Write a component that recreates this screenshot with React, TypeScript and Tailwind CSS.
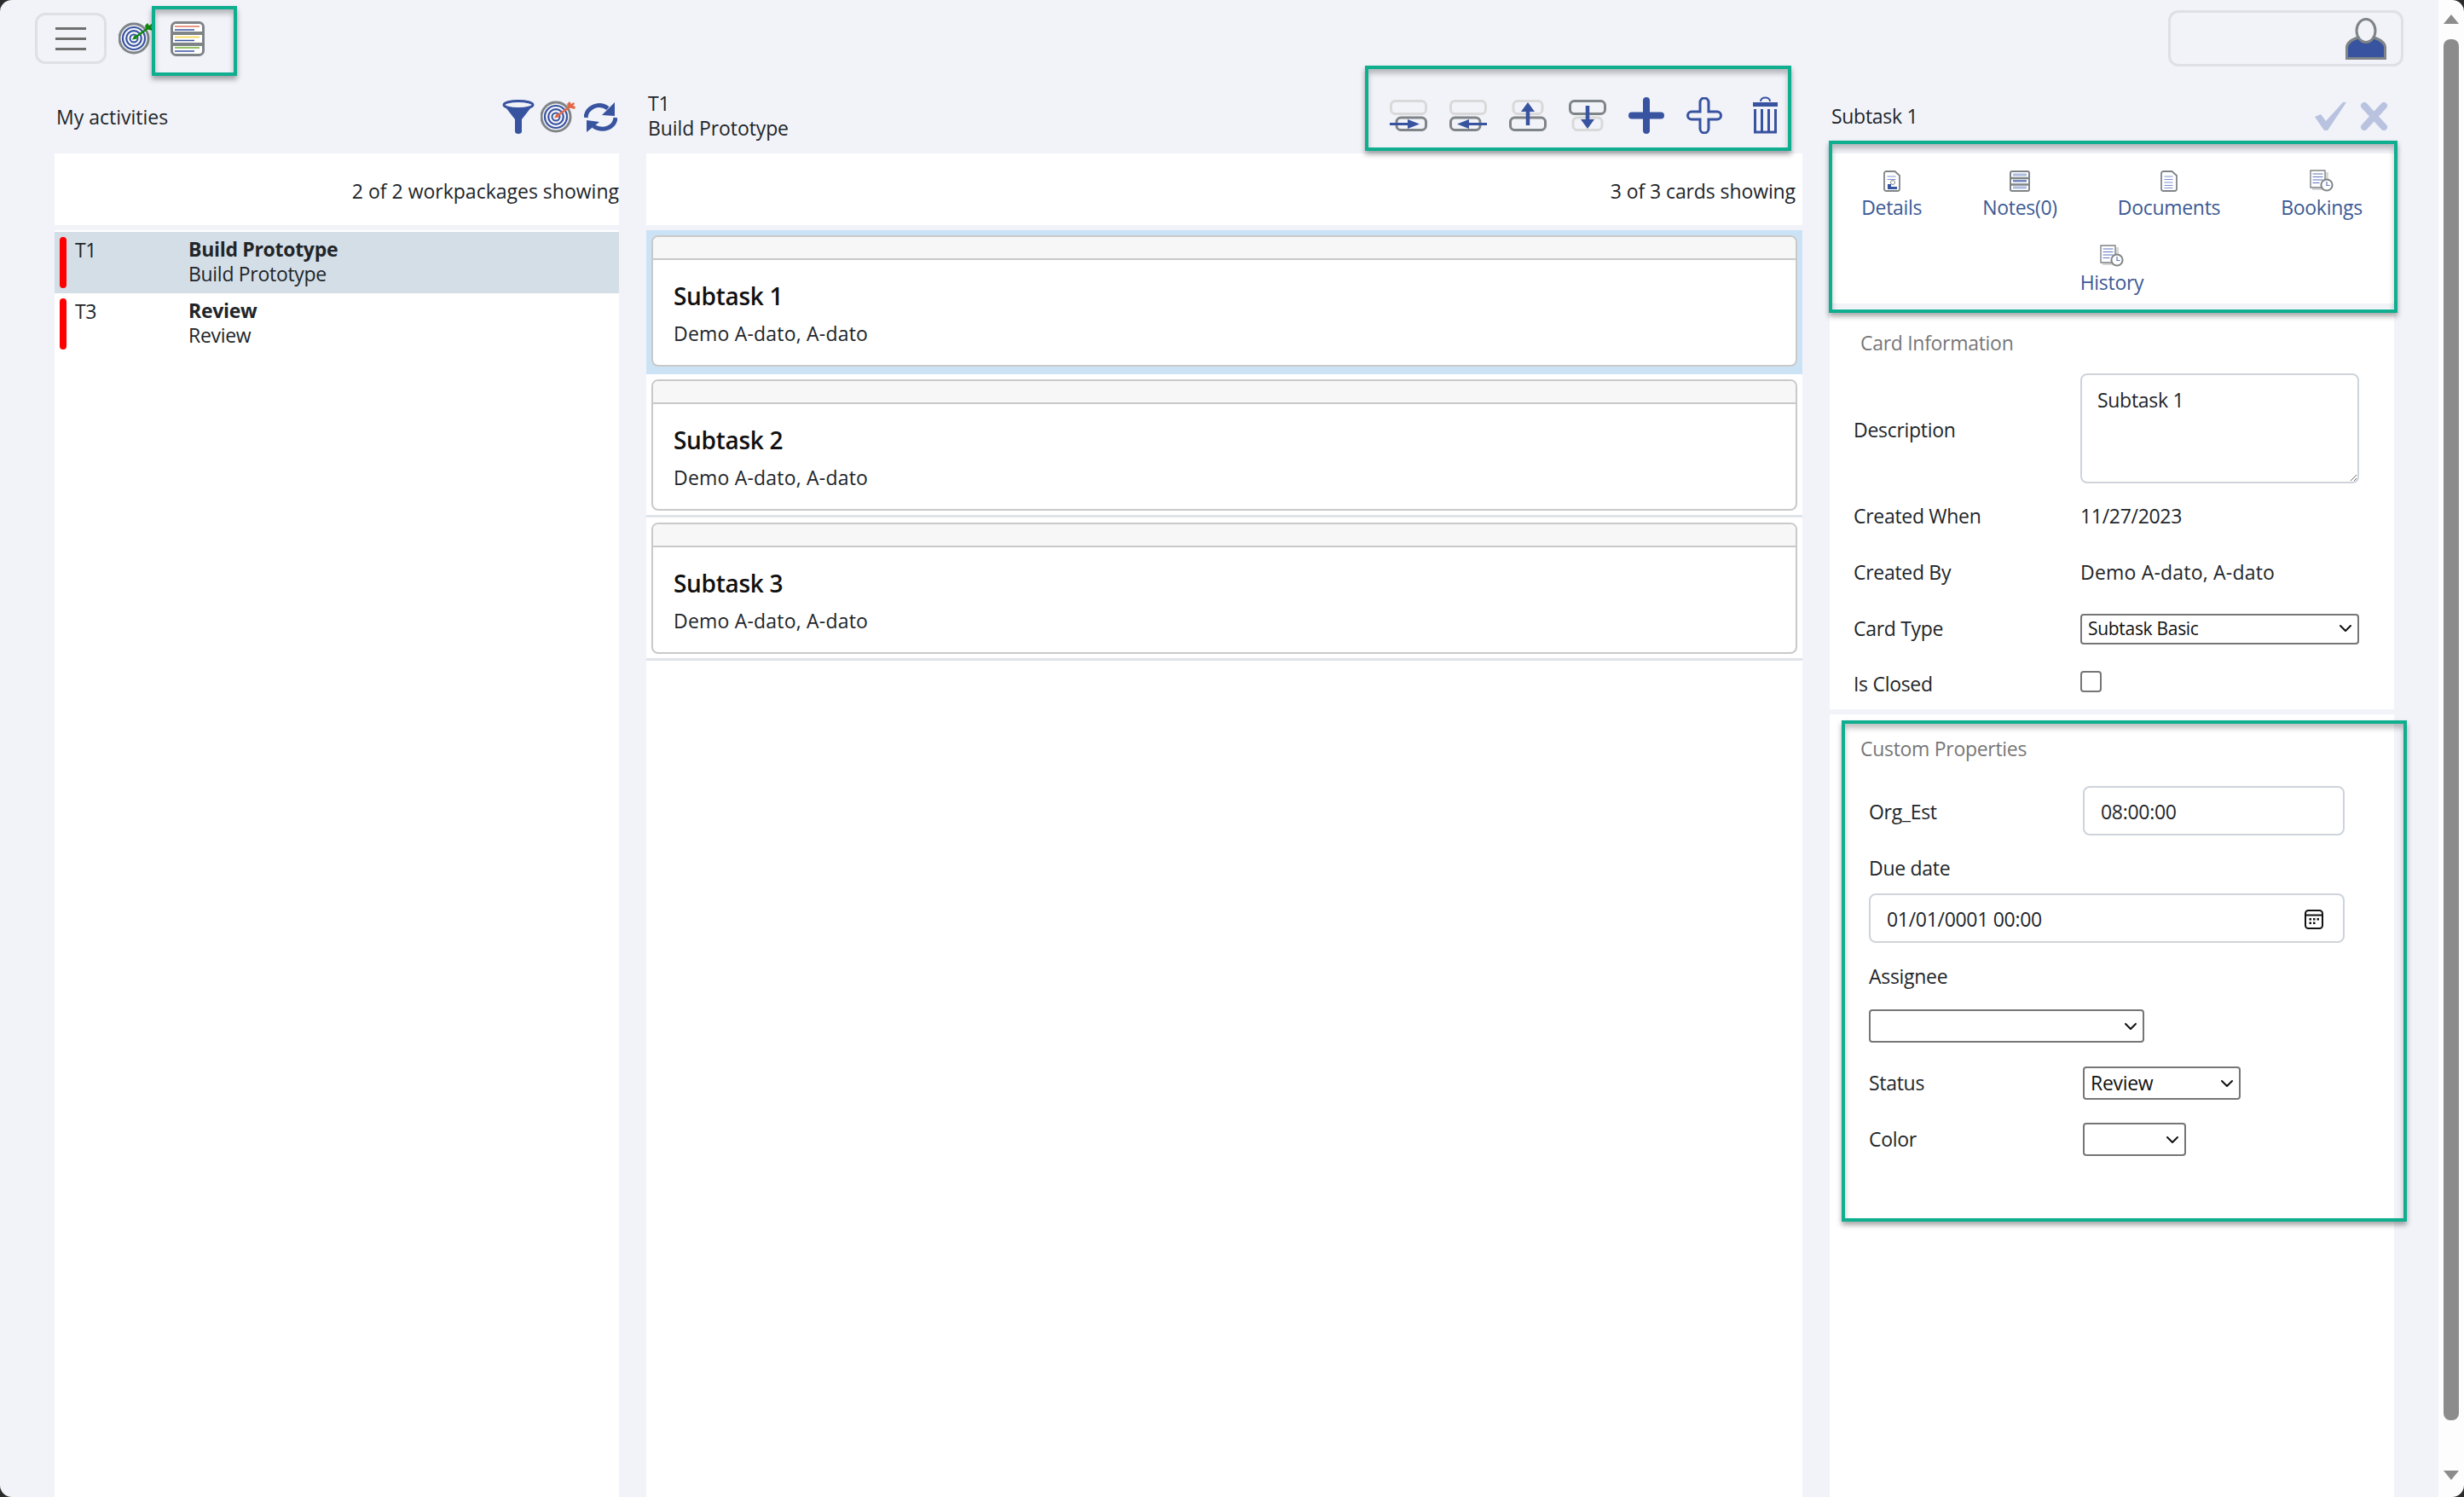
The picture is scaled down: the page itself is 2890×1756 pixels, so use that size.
import { ChevronDown } from "lucide-react"

const BLUE = "#38539f"
const GRAY = "#7f8487"
const LIGHT = "#d9d9d9"

function TargetIcon({ arrow, className }: { arrow: string; className: string }) {
  return (
    <svg viewBox="0 0 44 38" className={className} fill="none">
      <circle cx="18" cy="19" r="17" fill="#f6f7fb" stroke={GRAY} strokeWidth="3" />
      <circle cx="18" cy="19" r="13" stroke={BLUE} strokeWidth="2.200" />
      <circle cx="18" cy="19" r="8.800" stroke={BLUE} strokeWidth="2.200" />
      <circle cx="18" cy="19" r="4.500" stroke={BLUE} strokeWidth="2" />
      <path d="M18 19 36 6" stroke={arrow} strokeWidth="2.400" />
      <path d="M16 20.500l6-1-3-4.500zM34 1l2 3 3-2 1 2-2 2 3 1-1 3-4-1-4-1-1-4z" fill={arrow} />
    </svg>
  )
}

function StackIcon() {
  return (
    <svg viewBox="0 0 40 41" className="h-[41px] w-[40px]">
      <rect x="1.500" y="1.500" width="37" height="38" rx="5" fill="#fff" stroke={GRAY} strokeWidth="3" />
      <path d="M1 14h38M1 27h38" stroke={GRAY} strokeWidth="4" />
      <path d="M5 6h29" stroke="#e2765a" strokeWidth="1.500" />
      <path d="M5 10h23M5 22.500h23M5 35h23" stroke={BLUE} strokeWidth="1.300" />
      <path d="M5 18.500h29" stroke="#f6d13c" strokeWidth="1.500" />
      <path d="M5 31h29" stroke="#93c263" strokeWidth="2" />
    </svg>
  )
}

function FunnelIcon() {
  return (
    <svg viewBox="0 0 38 40" className="h-[40px] w-[38px]">
      <path d="M1 5 15 23v14a4 3 0 0 0 8 0V23L37 5z" fill={BLUE} />
      <ellipse cx="19" cy="6" rx="17" ry="4.500" fill="#f1f3f9" stroke={BLUE} strokeWidth="3" />
    </svg>
  )
}

function RefreshIcon() {
  return (
    <svg viewBox="0 0 39 37" className="h-[37px] w-[39px]" fill="none">
      <path d="M2 19C3 7 17 0 28 8" stroke={BLUE} strokeWidth="5" />
      <path d="M36 1v16l-15-1z" fill={BLUE} />
      <path d="M37 19c-1 12-15 17-26 10" stroke={BLUE} strokeWidth="5" />
      <path d="M3 36V22l15 2z" fill={BLUE} />
    </svg>
  )
}

function MoveSideIcon({ flip }: { flip?: boolean }) {
  return (
    <svg viewBox="0 0 44 37" className={`h-[37px] w-[44px] ${flip ? "-scale-x-100" : ""}`} fill="none">
      <rect x="1.500" y="1.500" width="41" height="15" rx="5" stroke={LIGHT} strokeWidth="3" />
      <rect x="8" y="21" width="34.500" height="14.500" rx="5" stroke={GRAY} strokeWidth="3" />
      <path d="M0 28.500h24" stroke={BLUE} strokeWidth="3" />
      <path d="M21 23l14 5.500-14 5.500z" fill={BLUE} />
    </svg>
  )
}

function MoveVertIcon({ down }: { down?: boolean }) {
  return (
    <svg viewBox="0 0 44 37" className="h-[37px] w-[44px]" fill="none">
      <rect x={down ? 1.5 : 5} y="1.500" width={down ? 41 : 34} height="15" rx="5" stroke={down ? GRAY : LIGHT} strokeWidth="3" />
      <rect x={down ? 5 : 1.5} y="21" width={down ? 34 : 41} height="14.500" rx="5" stroke={down ? LIGHT : GRAY} strokeWidth="3" />
      {down ? (
        <>
          <path d="M22 7v22" stroke={BLUE} strokeWidth="4.500" />
          <path d="M14 23h16l-8 11z" fill={BLUE} />
        </>
      ) : (
        <>
          <path d="M22 30V8" stroke={BLUE} strokeWidth="4.500" />
          <path d="M14 14h16L22 3z" fill={BLUE} />
        </>
      )}
    </svg>
  )
}

function PlusIcon() {
  return (
    <svg viewBox="0 0 42 43" className="h-[43px] w-[42px]">
      <path d="M21 4v35M4 21.500h34" stroke={BLUE} strokeWidth="8" strokeLinecap="round" />
    </svg>
  )
}

function PlusOutlineIcon() {
  return (
    <svg viewBox="0 0 42 43" className="h-[43px] w-[42px]" fill="none">
      <path
        d="M16 6a5 5 0 0 1 10 0v11h10a4.500 4.500 0 0 1 0 9H26v11a5 5 0 0 1-10 0V26H6a4.500 4.500 0 0 1 0-9h10z"
        stroke={BLUE}
        strokeWidth="3"
      />
    </svg>
  )
}

function TrashIcon() {
  return (
    <svg viewBox="0 0 31 44" className="h-[44px] w-[31px]" fill="none">
      <path d="M1 7h29v5H1z" fill={BLUE} />
      <path d="M10 6c0-6 11-6 11 0" stroke={BLUE} strokeWidth="2" />
      <path d="M3.500 15v27h24V15" stroke={BLUE} strokeWidth="3" />
      <path d="M11.500 15v26M19.500 15v26" stroke={BLUE} strokeWidth="3" />
    </svg>
  )
}

function CheckIcon() {
  return (
    <svg viewBox="0 0 37 33" className="h-[33px] w-[37px]">
      <path d="M0 17l7-3 6 8L33 0h4L15 33h-4z" fill="#b9c3df" />
    </svg>
  )
}

function CloseIcon() {
  return (
    <svg viewBox="0 0 33 33" className="h-[33px] w-[33px]">
      <path d="M5 4l23 25M28 4 5 29" stroke="#b9c3df" strokeWidth="8" strokeLinecap="round" />
    </svg>
  )
}

function UserIcon() {
  return (
    <svg viewBox="0 0 48 49" className="h-[49px] w-[48px]">
      <path d="M1.500 47.500V35c0-6 5-9 13-12h19c8 3 13 6 13 12v12.500z" fill={BLUE} stroke={GRAY} strokeWidth="3" />
      <ellipse cx="24" cy="15" rx="11" ry="13.500" fill="#f1f3f9" stroke={GRAY} strokeWidth="3" />
    </svg>
  )
}

function DocIcon({ kind }: { kind: "details" | "documents" }) {
  return (
    <svg viewBox="0 0 20 25" className="h-[25px] w-[20px]" fill="none">
      <path d="M3.500 1h10l5.500 5v15.500a2.500 2.500 0 0 1-2.500 2.500h-13A2.500 2.500 0 0 1 1 21.500v-18A2.500 2.500 0 0 1 3.500 1z" fill="#fff" stroke={GRAY} strokeWidth="1.800" />
      <path d="M4.500 7h10M4.500 10.500h10" stroke="#7e8fd0" strokeWidth="1.200" />
      {kind === "documents" ? (
        <path d="M4.500 14h10M4.500 17.500h10M4.500 20.500h10" stroke="#7e8fd0" strokeWidth="1.200" />
      ) : (
        <>
          <circle cx="11" cy="14" r="2.500" stroke={GRAY} strokeWidth="1" />
          <path d="M5 16h4v3h7v3H5z" fill={BLUE} />
        </>
      )}
    </svg>
  )
}

function NotesIcon() {
  return (
    <svg viewBox="0 0 24 25" className="h-[25px] w-[24px]">
      <rect x="1" y="1" width="22" height="23" rx="2" fill="#fff" stroke={GRAY} strokeWidth="2" />
      <path d="M1 9h22M1 16.500h22" stroke={GRAY} strokeWidth="2.400" />
      <path d="M4 5h16M4 12.500h16M4 20h16" stroke="#aebbe0" strokeWidth="3" />
      <path d="M4 12h16" stroke={BLUE} strokeWidth="1" />
    </svg>
  )
}

function ClockDocIcon() {
  return (
    <svg viewBox="0 0 28 26" className="h-[26px] w-[28px]">
      <path d="M18 3h4v13H18zM3 21h12v3H3z" fill="#d8d8d8" />
      <path d="M1 1h17v20H1z" fill="#fff" stroke={GRAY} strokeWidth="1.400" />
      <path d="M3.500 5h12M3.500 8.500h12M3.500 12h12M3.500 15.500h8" stroke="#5d74bd" strokeWidth="1.200" />
      <circle cx="20" cy="18" r="6.600" fill="#fff" stroke={GRAY} strokeWidth="2" />
      <path d="M20 14v4.500h3.500" fill="none" stroke="#5d74bd" strokeWidth="1.200" />
    </svg>
  )
}

function CalendarIcon() {
  return (
    <svg viewBox="0 0 22 23" className="h-[23px] w-[22px]" fill="none">
      <rect x="1" y="1" width="20" height="21" rx="3.500" stroke="#111" strokeWidth="2" />
      <path d="M1 6.500h20" stroke="#111" strokeWidth="2" />
      <path d="M5.500 10h2.500v2.500H5.500zM10 10h2.500v2.500H10zM14.500 10H17v2.500h-2.500zM5.500 14.500h2.500V17H5.500zM10 14.500h2.500V17H10z" fill="#111" />
    </svg>
  )
}

function Annotation({ className }: { className: string }) {
  return (
    <div
      className={`pointer-events-none absolute border-[4px] border-[#0fae8f] shadow-[0_4px_6px_rgba(0,0,0,0.35),inset_0_5px_6px_rgba(0,0,0,0.25)] ${className}`}
    />
  )
}

function Select({ width, value, options, textSize = "text-[21px]" }: { width: string; value?: string; options: string[]; textSize?: string }) {
  return (
    <div className={`relative h-full ${width}`}>
      <select
        defaultValue={value}
        className={`h-full w-full appearance-none rounded-[4px] border-2 border-[#767676] bg-white px-[7px] text-[#111] ${textSize}`}
      >
        {options.map((o) => (
          <option key={o}>{o}</option>
        ))}
      </select>
      <ChevronDown className="pointer-events-none absolute top-1/2 right-[4px] h-[24px] w-[24px] -translate-y-1/2 text-[#111]" strokeWidth={2} />
    </div>
  )
}

const packages = [
  { id: "T1", title: "Build Prototype", selected: true },
  { id: "T3", title: "Review", selected: false },
]

const cards = [
  { title: "Subtask 1", selected: true },
  { title: "Subtask 2", selected: false },
  { title: "Subtask 3", selected: false },
]

const tabs = [
  { label: "Details", icon: <DocIcon kind="details" /> },
  { label: "Notes(0)", icon: <NotesIcon /> },
  { label: "Documents", icon: <DocIcon kind="documents" /> },
  { label: "Bookings", icon: <ClockDocIcon /> },
  { label: "History", icon: <ClockDocIcon /> },
]

const labelClass = "text-[23px] leading-[30px] text-[#212529]"
const fieldClass = "rounded-[8px] border-2 border-[#ced4da] bg-white text-[23px] text-[#212529]"

export default function App() {
  return (
    <div className="relative flex h-[1756px] w-[2890px] overflow-hidden bg-[#2b2b2b] font-['Open_Sans',sans-serif] text-[23px] tracking-[-0.3px] text-[#212529]">
      <div className="flex min-w-0 flex-1 flex-col rounded-tl-[14px] rounded-bl-[14px] bg-[#f1f3f9]">
        {/* Top bar */}
        <header className="flex h-[90px] shrink-0 items-center pr-[41px] pl-[41px]">
          <button className="flex h-[60px] w-[84px] flex-col items-center justify-center gap-[9px] rounded-[12px] border-[3px] border-[#dfe0e5]">
            <span className="h-[3px] w-[36px] bg-[#6f6f6f]" />
            <span className="h-[3px] w-[36px] bg-[#6f6f6f]" />
            <span className="h-[3px] w-[36px] bg-[#6f6f6f]" />
          </button>
          <TargetIcon arrow="#108a10" className="ml-[14px] h-[38px] w-[44px]" />
          <div className="ml-[17px]">
            <StackIcon />
          </div>
          <div className="ml-auto flex h-[66px] w-[276px] items-center justify-end rounded-[12px] border-[3px] border-[#dfe0e5] pr-[17px]">
            <UserIcon />
          </div>
        </header>

        <div className="flex min-h-0 flex-1 gap-[32px] pl-[64px]">
          {/* My activities */}
          <section className="flex w-[662px] flex-col">
            <div className="flex h-[90px] shrink-0 items-center justify-between pt-[4px]">
              <span className="pl-[2px] tracking-normal">My activities</span>
              <div className="flex items-center gap-[7px] pr-[2px]">
                <FunnelIcon />
                <TargetIcon arrow="#e2694b" className="h-[38px] w-[44px]" />
                <RefreshIcon />
              </div>
            </div>
            <div className="flex h-[84px] shrink-0 items-center justify-end bg-white pt-[4px]">
              <span className="tracking-normal">2 of 2 workpackages showing</span>
            </div>
            <div className="mt-[6px] flex-1 bg-white pt-[2px]">
              {packages.map((p) => (
                <div key={p.id} className={`flex h-[72px] items-start py-[6px] pl-[6px] ${p.selected ? "bg-[#d4dee7]" : ""}`}>
                  <span className="h-[60px] w-[8px] rounded-full bg-[#ff0000]" />
                  <span className="w-[143px] pl-[10px] leading-[30px]">{p.id}</span>
                  <div className="leading-[29px]">
                    <div className="font-bold">{p.title}</div>
                    <div>{p.title}</div>
                  </div>
                </div>
              ))}
            </div>
          </section>

          {/* Cards */}
          <section className="flex w-[1356px] flex-col">
            <div className="flex h-[90px] shrink-0 items-center justify-between pr-[28px] pl-[2px]">
              <div className="flex flex-col pt-[2px] leading-[29px] tracking-[-0.1px]">
                <span>T1</span>
                <span>Build Prototype</span>
              </div>
              <div className="flex h-[45px] items-center gap-[26px]">
                <MoveSideIcon />
                <MoveSideIcon flip />
                <MoveVertIcon />
                <MoveVertIcon down />
                <PlusIcon />
                <PlusOutlineIcon />
                <div className="ml-[9px] flex">
                  <TrashIcon />
                </div>
              </div>
            </div>
            <div className="flex h-[84px] shrink-0 items-center justify-end bg-white pt-[4px] pr-[8px]">
              <span className="tracking-[-0.1px]">3 of 3 cards showing</span>
            </div>
            <div className="mt-[6px] flex-1 bg-white">
              {cards.map((c) => (
                <div key={c.title} className={c.selected ? "h-[169px] bg-[#cce3f5] p-[6px]" : "h-[168px] border-b-[3px] border-[#e0e3e8] px-[6px] pt-[6px]"}>
                  <div className="h-[154px] overflow-hidden rounded-[8px] border-2 border-[#c9c9c9] bg-white">
                    <div className="h-[27px] border-b-2 border-[#c9c9c9] bg-[#f7f7f7]" />
                    <div className="px-[24px] pt-[24px]">
                      <div className="text-[28px] leading-[36px] font-semibold text-[#111]">{c.title}</div>
                      <div className="mt-[11px] leading-[30px] tracking-[0.2px] text-[#212529]">Demo A-dato, A-dato</div>
                    </div>
                  </div>
                </div>
              ))}
            </div>
          </section>

          {/* Card details */}
          <section className="flex w-[662px] flex-col">
            <div className="flex h-[90px] shrink-0 items-center justify-between pt-[2px] pr-[7px] pl-[2px]">
              <span>Subtask 1</span>
              <div className="flex items-center gap-[16px]">
                <CheckIcon />
                <CloseIcon />
              </div>
            </div>
            <nav className="flex h-[176px] shrink-0 flex-wrap content-start justify-center gap-x-[71px] gap-y-[20px] bg-white pt-[19px]">
              {tabs.map((t) => (
                <div key={t.label} className="flex h-[68px] flex-col items-center text-[#3c5a95]">
                  <div className="flex h-[26px] items-center">{t.icon}</div>
                  <span className="mt-[3px] leading-[30px]">{t.label}</span>
                </div>
              ))}
            </nav>

            <div className="mt-[6px] h-[470px] shrink-0 bg-white pt-[25px]">
              <div className="pl-[36px] leading-[30px] text-[#777]">Card Information</div>
              <div className="mt-[21px] pl-[28px]">
                <div className="flex items-center">
                  <span className="w-[266px] pt-[3px]">Description</span>
                  <textarea
                    defaultValue="Subtask 1"
                    className={`h-[129px] w-[327px] px-[18px] py-[14px] leading-[30px] ${fieldClass}`}
                  />
                </div>
                <div className="mt-[20px] flex h-[36px] items-center">
                  <span className="w-[266px]">Created When</span>
                  <span>11/27/2023</span>
                </div>
                <div className="mt-[30px] flex h-[36px] items-center">
                  <span className="w-[266px]">Created By</span>
                  <span className="tracking-[0.2px]">Demo A-dato, A-dato</span>
                </div>
                <div className="mt-[30px] flex h-[36px] items-center">
                  <span className="w-[266px]">Card Type</span>
                  <Select width="w-[327px]" value="Subtask Basic" options={["Subtask Basic"]} />
                </div>
                <div className="mt-[29px] flex h-[36px] items-center">
                  <span className="w-[266px] pt-[1px]">Is Closed</span>
                  <input type="checkbox" className="mb-[6px] h-[25px] w-[25px] appearance-none rounded-[4px] border-2 border-[#767676] bg-white" />
                </div>
              </div>
            </div>

            <div className="mt-[6px] min-h-0 flex-1 bg-white pt-[25px]">
              <div className="pl-[36px] leading-[30px] text-[#777]">Custom Properties</div>
              <div className="pl-[46px]">
                <div className="mt-[29px] flex h-[58px] items-center">
                  <span className="w-[251px] pt-[2px]">Org_Est</span>
                  <input readOnly value="08:00:00" className={`h-full w-[307px] px-[19px] pt-[2px] ${fieldClass}`} />
                </div>
                <div className={`mt-[23px] ${labelClass}`}>Due date</div>
                <div className={`mt-[15px] flex h-[58px] w-[558px] items-center justify-between pt-[2px] pr-[23px] pl-[19px] ${fieldClass}`}>
                  <span>01/01/0001 00:00</span>
                  <CalendarIcon />
                </div>
                <div className={`mt-[24px] ${labelClass}`}>Assignee</div>
                <div className="mt-[24px] h-[39px]">
                  <Select width="w-[323px]" options={[""]} />
                </div>
                <div className="mt-[28px] flex h-[39px] items-center">
                  <span className="w-[251px]">Status</span>
                  <Select width="w-[185px]" value="Review" options={["Review"]} textSize="text-[23px]" />
                </div>
                <div className="mt-[27px] flex h-[39px] items-center">
                  <span className="w-[251px]">Color</span>
                  <Select width="w-[121px]" options={[""]} />
                </div>
              </div>
            </div>
          </section>
        </div>
      </div>

      {/* Browser scrollbar */}
      <div className="w-[30px] shrink-0 rounded-tr-[14px] rounded-br-[14px] bg-[#fdfdfd]">
        <div className="mx-auto mt-[17px] h-0 w-0 border-x-[9px] border-b-[11px] border-x-transparent border-b-[#8c8c8c]" />
        <div className="mx-auto mt-[18px] h-[1620px] w-[18px] rounded-[8px] bg-[#8c8c8c]" />
        <div className="mx-auto mt-[59px] h-0 w-0 border-x-[9px] border-t-[11px] border-x-transparent border-t-[#8c8c8c]" />
      </div>

      {/* Green annotation frames drawn over the screenshot */}
      <Annotation className="top-[7px] left-[178px] h-[82px] w-[100px]" />
      <Annotation className="top-[77px] left-[1601px] h-[100px] w-[500px]" />
      <Annotation className="top-[165px] left-[2145px] h-[202px] w-[667px]" />
      <Annotation className="top-[845px] left-[2160px] h-[588px] w-[663px]" />
    </div>
  )
}
